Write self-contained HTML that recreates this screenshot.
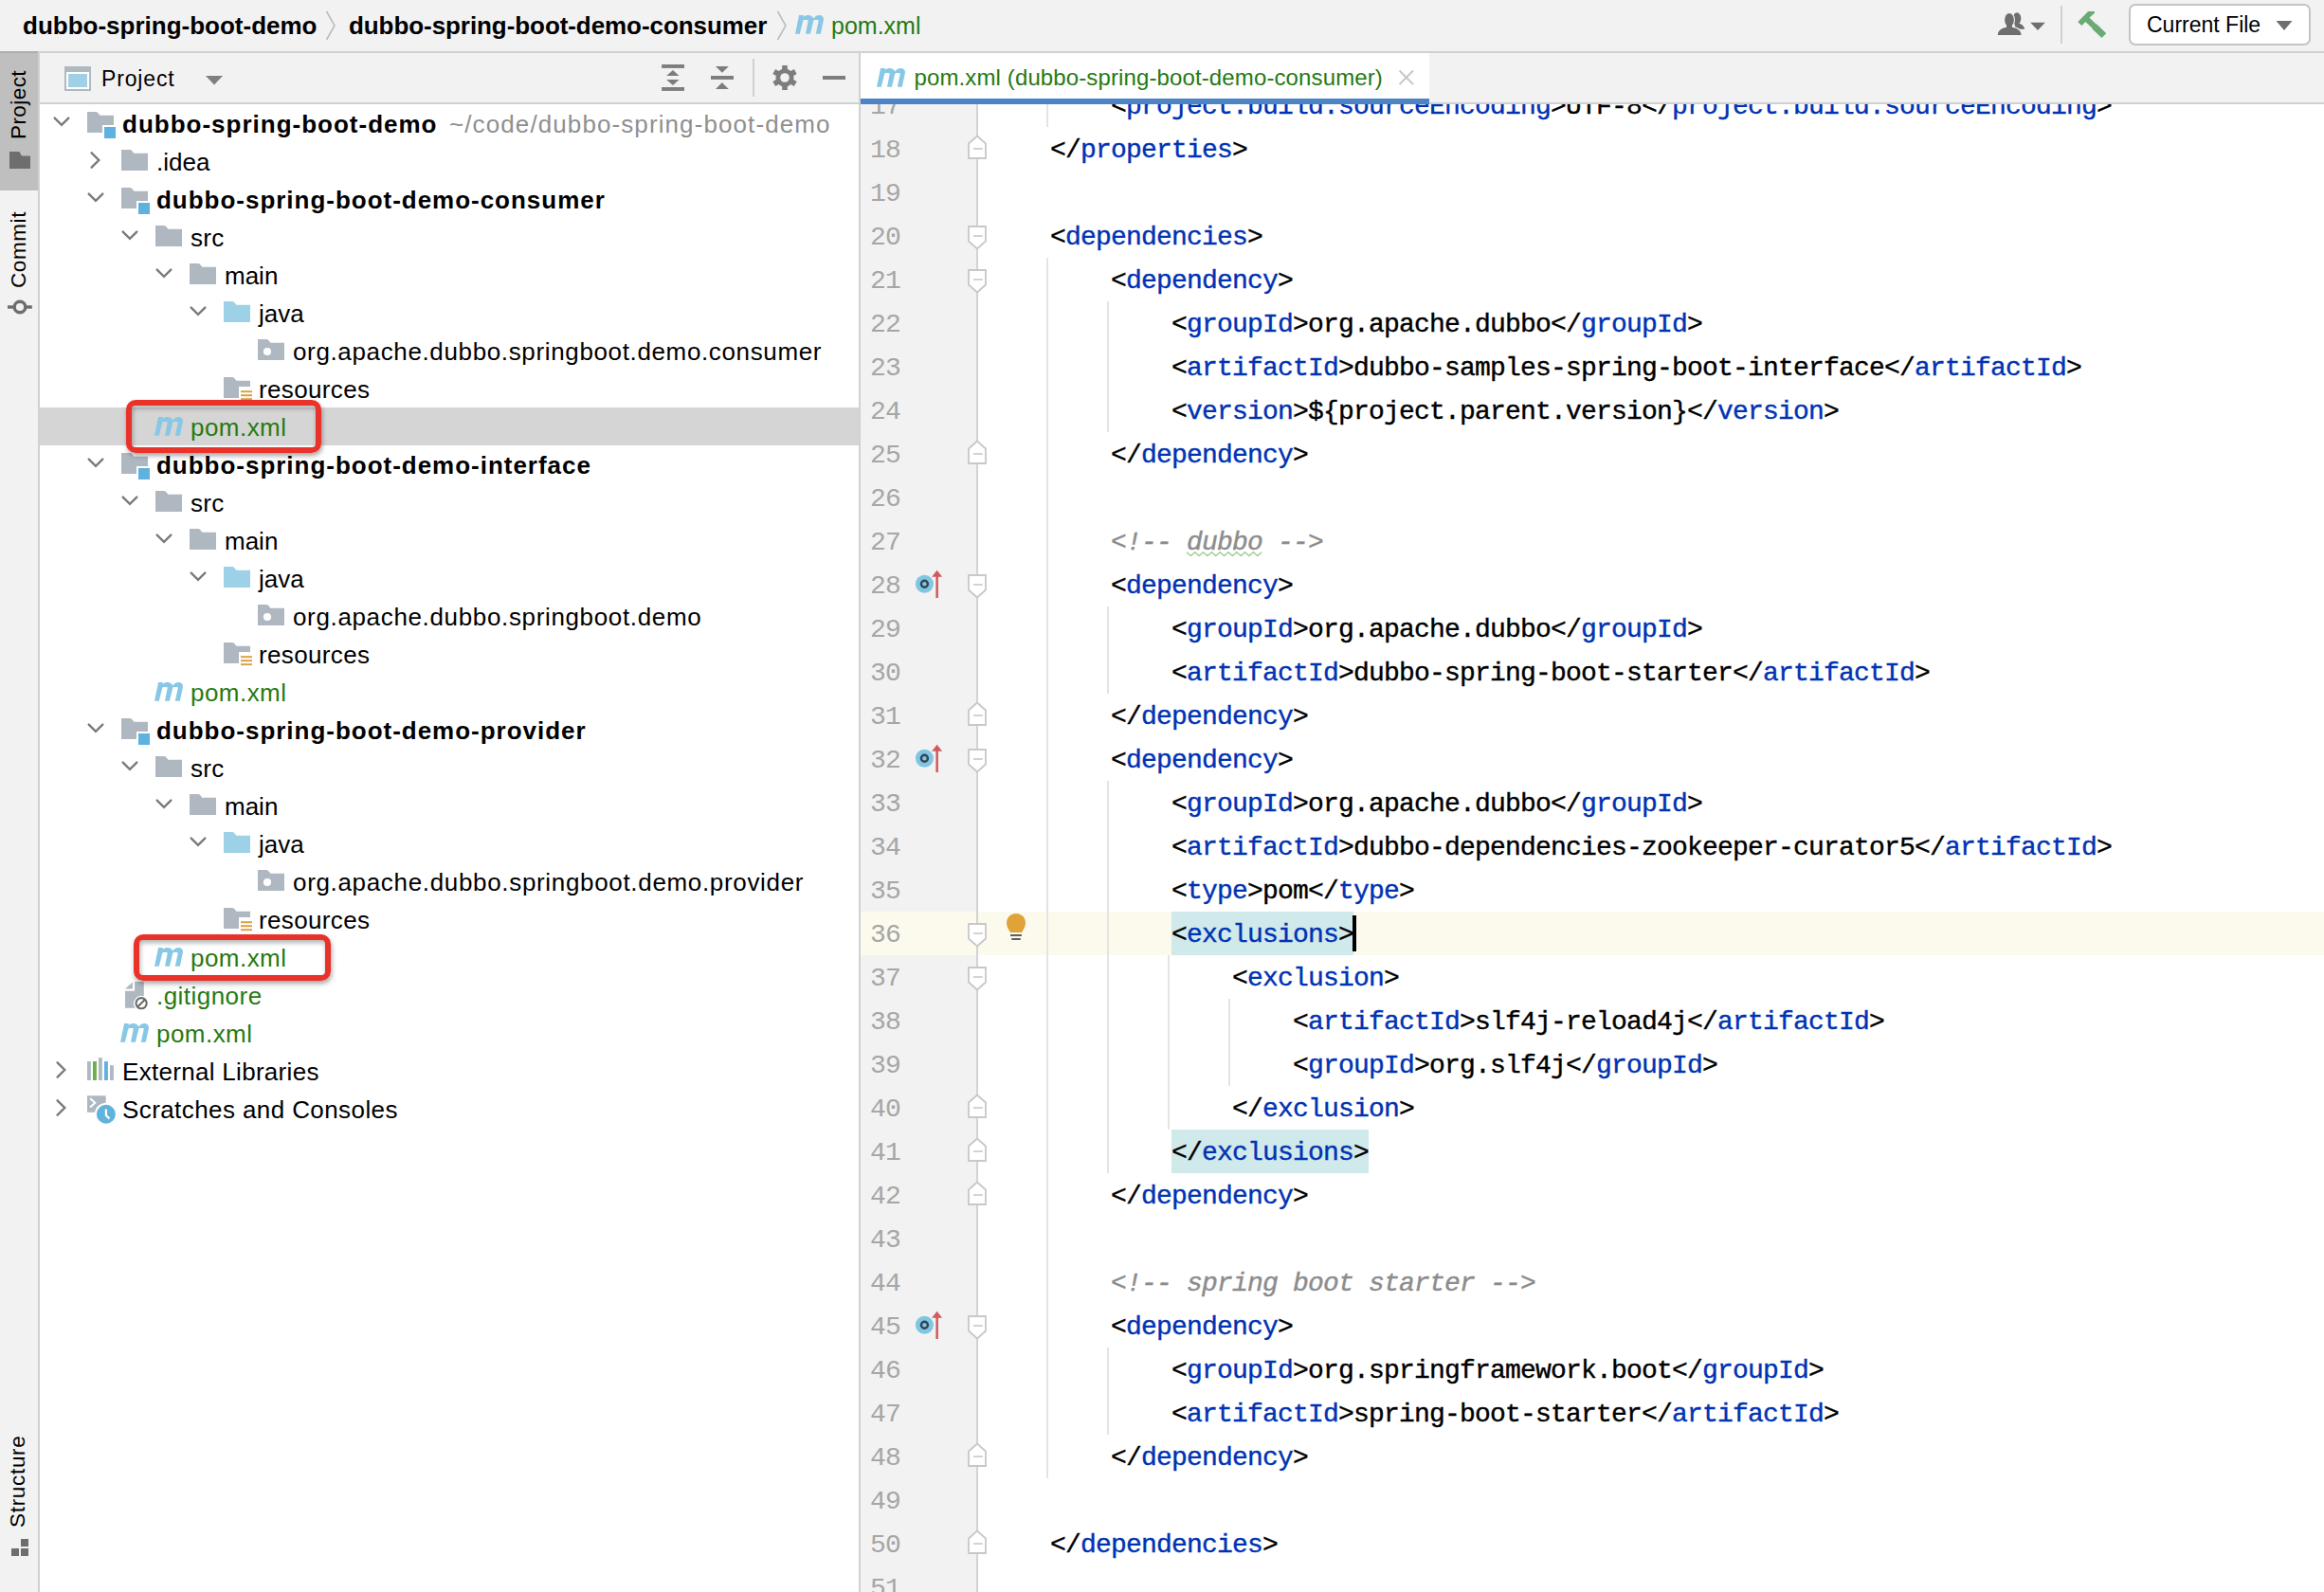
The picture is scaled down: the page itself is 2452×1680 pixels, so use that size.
<!DOCTYPE html><html><head><meta charset="utf-8"><style>
*{margin:0;padding:0;box-sizing:border-box}
html,body{width:2452px;height:1680px;overflow:hidden;background:#fff}
body{position:relative;font-family:"Liberation Sans",sans-serif;color:#000}
.a{position:absolute}
.t{position:absolute;white-space:pre;line-height:1}
svg{position:absolute;overflow:visible}
.code{position:absolute;font-family:"Liberation Mono",monospace;white-space:pre;line-height:46px;height:46px;-webkit-text-stroke:0.4px currentColor}
.tg{color:#0033b3}
.cm{color:#8c8c8c;font-style:italic}
</style></head><body><div class="a" style="left:0px;top:0px;width:2452px;height:54px;background:#f2f2f2;"></div>
<div class="a" style="left:0px;top:54px;width:2452px;height:2px;background:#d1d1d1;"></div>
<div class="t" style="left:24px;top:13.99px;font-size:26px;color:#000;font-weight:bold;letter-spacing:0px;">dubbo-spring-boot-demo</div>
<svg style="left:340px;top:10px" width="20" height="36" viewBox="0 0 20 36"><polyline points="4.5,2 13,17 4.5,32" fill="none" stroke="#b9bdc1" stroke-width="1.6"/></svg>
<div class="t" style="left:368px;top:13.99px;font-size:26px;color:#000;font-weight:bold;letter-spacing:-0.07px;">dubbo-spring-boot-demo-consumer</div>
<svg style="left:816px;top:10px" width="20" height="36" viewBox="0 0 20 36"><polyline points="4.5,2 13,17 4.5,32" fill="none" stroke="#b9bdc1" stroke-width="1.6"/></svg>
<svg style="left:839px;top:15.8px" width="31" height="21" viewBox="0 0 31 21"><path d="M0,19.8 L4.05,0 H8.85 L8.5,1.7 C10,0.5 12,0 13.8,0 C16.3,0 18.3,1.3 19.4,3.4 C20.9,1.1 23.2,0 25.3,0 C28.7,0 30.4,2.3 29.9,5.2 L26.8,19.8 H21.8 L24.6,6.6 C24.9,5.3 24.2,4.9 23.2,4.9 H20.4 C19.8,4.9 19.4,5.5 19.2,6.3 L15.9,19.8 H11.0 L13.6,6.6 C13.9,5.3 13.2,4.9 12.2,4.9 H9.4 C8.8,4.9 8.4,5.5 8.2,6.3 L4.8,19.8 Z" fill="#88c8e6"/></svg>
<div class="t" style="left:877px;top:14.84px;font-size:25px;color:#267a12;font-weight:normal;letter-spacing:0px;">pom.xml</div>
<svg style="left:2104px;top:10px" width="36" height="30" viewBox="0 0 36 30"><g fill="#6e6e6e"><ellipse cx="24" cy="9.5" rx="4.3" ry="6.2"/><path d="M21,13.8 C26,14.2 31.8,16 32,20.7 H23 Z"/></g><g fill="#6e6e6e" stroke="#f2f2f2" stroke-width="2.2"><ellipse cx="16" cy="11" rx="4.9" ry="7.1"/><path d="M3.8,27 C3.8,22 8,19.6 12.5,18.9 H19.5 C24,19.6 28.5,22 28.5,27 Z"/></g><g fill="#6e6e6e"><ellipse cx="16" cy="11" rx="4.9" ry="7.1"/><path d="M3.8,27 C3.8,22 8,19.6 12.5,18.9 H19.5 C24,19.6 28.5,22 28.5,27 Z"/><rect x="13" y="15" width="6" height="5"/></g></svg>
<svg style="left:2140px;top:20px" width="20" height="14" viewBox="0 0 20 14"><polygon points="2.2,3.8 17.8,3.8 10,11.9" fill="#6e6e6e"/></svg>
<div class="a" style="left:2174px;top:6px;width:2px;height:40px;background:#d1d1d1;"></div>
<svg style="left:2188px;top:8px" width="40" height="36" viewBox="0 0 40 36"><polygon points="4.2,15.2 15.1,4 21.9,4 21.9,5.8 16.5,10.7 23.4,17.3 24.6,17.8 34.3,27.3 29.5,32 19.6,22.7 19.3,21.4 12.3,14.9 8.4,19" fill="#6aab73"/></svg>
<div class="a" style="left:2246px;top:4px;width:192px;height:44px;background:#fff;border:2px solid #c4c4c4;border-radius:7px"></div>
<div class="t" style="left:2265px;top:14.53px;font-size:23px;color:#000;font-weight:normal;letter-spacing:0px;">Current File</div>
<svg style="left:2398px;top:18px" width="24" height="16" viewBox="0 0 24 16"><polygon points="3.5,4 20.5,4 12,14" fill="#6e6e6e"/></svg>
<div class="a" style="left:0px;top:56px;width:40px;height:1624px;background:#f2f2f2;"></div>
<div class="a" style="left:40px;top:56px;width:2px;height:1624px;background:#d1d1d1;"></div>
<div class="a" style="left:0px;top:54px;width:40px;height:147px;background:#bfbfbf;"></div>
<div class="a" style="left:0px;top:54px;width:40px;height:2px;background:#adadad;"></div>
<div class="t" style="left:9.23px;top:146.80px;font-size:22.5px;color:#000;letter-spacing:0.43px;transform:rotate(-90deg);transform-origin:0 0">Project</div>
<svg style="left:8px;top:158px" width="28" height="22" viewBox="0 0 28 22"><path d="M2 2 H12.3 L15 6.5 H24 V20 H2 Z" fill="#6e6e6e"/></svg>
<div class="t" style="left:9.23px;top:303.80px;font-size:22.5px;color:#000;letter-spacing:0.58px;transform:rotate(-90deg);transform-origin:0 0">Commit</div>
<svg style="left:6px;top:312px" width="32" height="24" viewBox="0 0 32 24"><circle cx="15" cy="12" r="5.8" fill="none" stroke="#6e6e6e" stroke-width="3.4"/><rect x="2" y="10.3" width="7" height="3.4" fill="#6e6e6e"/><rect x="21" y="10.3" width="6.8" height="3.4" fill="#6e6e6e"/></svg>
<div class="t" style="left:8.43px;top:1611.70px;font-size:22.5px;color:#000;letter-spacing:0.69px;transform:rotate(-90deg);transform-origin:0 0">Structure</div>
<svg style="left:10px;top:1620px" width="24" height="26" viewBox="0 0 24 26"><g fill="#6e6e6e"><rect x="12" y="4" width="8" height="8"/><rect x="2" y="14" width="8" height="8"/><rect x="12" y="14" width="8" height="8"/></g></svg>
<div class="a" style="left:42px;top:56px;width:864px;height:52px;background:#f2f2f2;"></div>
<div class="a" style="left:42px;top:108px;width:864px;height:2px;background:#d1d1d1;"></div>
<svg style="left:66px;top:68px" width="32" height="30" viewBox="0 0 32 30"><rect x="2" y="2" width="28" height="26" fill="#b0b8c0"/><rect x="4" y="8" width="24" height="18" fill="#fff"/><rect x="6" y="10" width="20" height="14" fill="#9fd0e6"/></svg>
<div class="t" style="left:107px;top:72.33px;font-size:23px;color:#000;font-weight:normal;letter-spacing:0.85px;">Project</div>
<svg style="left:214px;top:76px" width="24" height="16" viewBox="0 0 24 16"><polygon points="3,4 21,4 12,13.5" fill="#7f7f7f"/></svg>
<svg style="left:690px;top:62px" width="40" height="40" viewBox="0 0 40 40"><g fill="#7d7d7d"><rect x="8.1" y="6" width="23.9" height="3.9"/><polygon points="13.1,17.9 26.5,17.9 20,12"/><polygon points="13.1,22 26.5,22 20,27.9"/><rect x="8.1" y="30" width="23.9" height="3.9"/></g></svg>
<svg style="left:740px;top:62px" width="40" height="40" viewBox="0 0 40 40"><g fill="#7d7d7d"><polygon points="15,7.9 28.8,7.9 21.9,14.8"/><rect x="10" y="18" width="24" height="3.9"/><polygon points="15,32 28.8,32 21.9,25.1"/></g></svg>
<div class="a" style="left:794px;top:62px;width:2px;height:40px;background:#d1d1d1;"></div>
<svg style="left:808px;top:62px" width="40" height="40" viewBox="0 0 40 40"><g transform="translate(20,20)" fill="#7d7d7d"><rect x="-2.8" y="-13" width="5.6" height="6" transform="rotate(0)"/><rect x="-2.8" y="-13" width="5.6" height="6" transform="rotate(60)"/><rect x="-2.8" y="-13" width="5.6" height="6" transform="rotate(120)"/><rect x="-2.8" y="-13" width="5.6" height="6" transform="rotate(180)"/><rect x="-2.8" y="-13" width="5.6" height="6" transform="rotate(240)"/><rect x="-2.8" y="-13" width="5.6" height="6" transform="rotate(300)"/><circle r="9.6"/></g><circle cx="20" cy="20" r="4.8" fill="#f2f2f2"/></svg>
<div class="a" style="left:868px;top:80px;width:24px;height:4px;background:#7d7d7d;"></div>
<div class="a" style="left:42px;top:430px;width:864px;height:40px;background:#d5d5d5;"></div>
<svg style="left:56px;top:110px" width="30" height="40" viewBox="0 0 30 40"><polyline points="1.7,14.6 9,21.8 16.3,14.6" fill="none" stroke="#7a7a7a" stroke-width="2.4" stroke-linecap="round"/></svg>
<svg style="left:92px;top:118px" width="32" height="28" viewBox="0 0 32 28"><path d="M0 0 H8.7 Q10.5 0 11.6 1.4 L13.4 3.8 H28 V14 H16 V22 H0 Z" fill="#afb8c0"/><rect x="18" y="16" width="12" height="12" fill="#5fb2dd"/></svg>
<div class="t" style="left:129px;top:117.99px;font-size:26px;color:#000;font-weight:bold;letter-spacing:1.0px;">dubbo-spring-boot-demo</div>
<div class="t" style="left:474px;top:117.99px;font-size:26px;color:#8f8f8f;font-weight:normal;letter-spacing:1.1px;">~/code/dubbo-spring-boot-demo</div>
<svg style="left:92px;top:150px" width="30" height="40" viewBox="0 0 30 40"><polyline points="4.6,11.3 12.3,19 4.6,26.7" fill="none" stroke="#7a7a7a" stroke-width="2.4" stroke-linecap="round"/></svg>
<svg style="left:128px;top:158px" width="28" height="22" viewBox="0 0 28 22"><path d="M0 0 H8.7 Q10.5 0 11.6 1.4 L13.4 3.8 H28 V22 H0 Z" fill="#afb8c0"/></svg>
<div class="t" style="left:165px;top:157.99px;font-size:26px;color:#000;font-weight:normal;letter-spacing:0px;">.idea</div>
<svg style="left:92px;top:190px" width="30" height="40" viewBox="0 0 30 40"><polyline points="1.7,14.6 9,21.8 16.3,14.6" fill="none" stroke="#7a7a7a" stroke-width="2.4" stroke-linecap="round"/></svg>
<svg style="left:128px;top:198px" width="32" height="28" viewBox="0 0 32 28"><path d="M0 0 H8.7 Q10.5 0 11.6 1.4 L13.4 3.8 H28 V14 H16 V22 H0 Z" fill="#afb8c0"/><rect x="18" y="16" width="12" height="12" fill="#5fb2dd"/></svg>
<div class="t" style="left:165px;top:197.99px;font-size:26px;color:#000;font-weight:bold;letter-spacing:0.98px;">dubbo-spring-boot-demo-consumer</div>
<svg style="left:128px;top:230px" width="30" height="40" viewBox="0 0 30 40"><polyline points="1.7,14.6 9,21.8 16.3,14.6" fill="none" stroke="#7a7a7a" stroke-width="2.4" stroke-linecap="round"/></svg>
<svg style="left:164px;top:238px" width="28" height="22" viewBox="0 0 28 22"><path d="M0 0 H8.7 Q10.5 0 11.6 1.4 L13.4 3.8 H28 V22 H0 Z" fill="#afb8c0"/></svg>
<div class="t" style="left:201px;top:237.99px;font-size:26px;color:#000;font-weight:normal;letter-spacing:0.3px;">src</div>
<svg style="left:164px;top:270px" width="30" height="40" viewBox="0 0 30 40"><polyline points="1.7,14.6 9,21.8 16.3,14.6" fill="none" stroke="#7a7a7a" stroke-width="2.4" stroke-linecap="round"/></svg>
<svg style="left:200px;top:278px" width="28" height="22" viewBox="0 0 28 22"><path d="M0 0 H8.7 Q10.5 0 11.6 1.4 L13.4 3.8 H28 V22 H0 Z" fill="#afb8c0"/></svg>
<div class="t" style="left:237px;top:277.99px;font-size:26px;color:#000;font-weight:normal;letter-spacing:0px;">main</div>
<svg style="left:200px;top:310px" width="30" height="40" viewBox="0 0 30 40"><polyline points="1.7,14.6 9,21.8 16.3,14.6" fill="none" stroke="#7a7a7a" stroke-width="2.4" stroke-linecap="round"/></svg>
<svg style="left:236px;top:318px" width="28" height="22" viewBox="0 0 28 22"><path d="M0 0 H8.7 Q10.5 0 11.6 1.4 L13.4 3.8 H28 V22 H0 Z" fill="#9dd1e8"/></svg>
<div class="t" style="left:273px;top:317.99px;font-size:26px;color:#000;font-weight:normal;letter-spacing:0px;">java</div>
<svg style="left:272px;top:358px" width="28" height="22" viewBox="0 0 28 22"><path d="M0 0 H8.7 Q10.5 0 11.6 1.4 L13.4 3.8 H28 V22 H0 Z" fill="#afb8c0"/><circle cx="10" cy="13" r="4.1" fill="#fff"/></svg>
<div class="t" style="left:309px;top:357.99px;font-size:26px;color:#000;font-weight:normal;letter-spacing:0.64px;">org.apache.dubbo.springboot.demo.consumer</div>
<svg style="left:236px;top:398px" width="32" height="26" viewBox="0 0 32 26"><path d="M0 0 H8.7 Q10.5 0 11.6 1.4 L13.4 3.8 H28 V10 H16 V22 H0 Z" fill="#afb8c0"/><g fill="#d9a343"><rect x="18" y="14.2" width="12" height="2"/><rect x="18" y="18.2" width="12" height="2"/><rect x="18" y="22.2" width="12" height="2"/></g></svg>
<div class="t" style="left:273px;top:397.99px;font-size:26px;color:#000;font-weight:normal;letter-spacing:0.36px;">resources</div>
<svg style="left:163px;top:440px" width="31" height="21" viewBox="0 0 31 21"><path d="M0,19.8 L4.05,0 H8.85 L8.5,1.7 C10,0.5 12,0 13.8,0 C16.3,0 18.3,1.3 19.4,3.4 C20.9,1.1 23.2,0 25.3,0 C28.7,0 30.4,2.3 29.9,5.2 L26.8,19.8 H21.8 L24.6,6.6 C24.9,5.3 24.2,4.9 23.2,4.9 H20.4 C19.8,4.9 19.4,5.5 19.2,6.3 L15.9,19.8 H11.0 L13.6,6.6 C13.9,5.3 13.2,4.9 12.2,4.9 H9.4 C8.8,4.9 8.4,5.5 8.2,6.3 L4.8,19.8 Z" fill="#88c8e6"/></svg>
<div class="t" style="left:201px;top:437.99px;font-size:26px;color:#267a12;font-weight:normal;letter-spacing:0.46px;">pom.xml</div>
<svg style="left:92px;top:470px" width="30" height="40" viewBox="0 0 30 40"><polyline points="1.7,14.6 9,21.8 16.3,14.6" fill="none" stroke="#7a7a7a" stroke-width="2.4" stroke-linecap="round"/></svg>
<svg style="left:128px;top:478px" width="32" height="28" viewBox="0 0 32 28"><path d="M0 0 H8.7 Q10.5 0 11.6 1.4 L13.4 3.8 H28 V14 H16 V22 H0 Z" fill="#afb8c0"/><rect x="18" y="16" width="12" height="12" fill="#5fb2dd"/></svg>
<div class="t" style="left:165px;top:477.99px;font-size:26px;color:#000;font-weight:bold;letter-spacing:0.98px;">dubbo-spring-boot-demo-interface</div>
<svg style="left:128px;top:510px" width="30" height="40" viewBox="0 0 30 40"><polyline points="1.7,14.6 9,21.8 16.3,14.6" fill="none" stroke="#7a7a7a" stroke-width="2.4" stroke-linecap="round"/></svg>
<svg style="left:164px;top:518px" width="28" height="22" viewBox="0 0 28 22"><path d="M0 0 H8.7 Q10.5 0 11.6 1.4 L13.4 3.8 H28 V22 H0 Z" fill="#afb8c0"/></svg>
<div class="t" style="left:201px;top:517.99px;font-size:26px;color:#000;font-weight:normal;letter-spacing:0.3px;">src</div>
<svg style="left:164px;top:550px" width="30" height="40" viewBox="0 0 30 40"><polyline points="1.7,14.6 9,21.8 16.3,14.6" fill="none" stroke="#7a7a7a" stroke-width="2.4" stroke-linecap="round"/></svg>
<svg style="left:200px;top:558px" width="28" height="22" viewBox="0 0 28 22"><path d="M0 0 H8.7 Q10.5 0 11.6 1.4 L13.4 3.8 H28 V22 H0 Z" fill="#afb8c0"/></svg>
<div class="t" style="left:237px;top:557.99px;font-size:26px;color:#000;font-weight:normal;letter-spacing:0px;">main</div>
<svg style="left:200px;top:590px" width="30" height="40" viewBox="0 0 30 40"><polyline points="1.7,14.6 9,21.8 16.3,14.6" fill="none" stroke="#7a7a7a" stroke-width="2.4" stroke-linecap="round"/></svg>
<svg style="left:236px;top:598px" width="28" height="22" viewBox="0 0 28 22"><path d="M0 0 H8.7 Q10.5 0 11.6 1.4 L13.4 3.8 H28 V22 H0 Z" fill="#9dd1e8"/></svg>
<div class="t" style="left:273px;top:597.99px;font-size:26px;color:#000;font-weight:normal;letter-spacing:0px;">java</div>
<svg style="left:272px;top:638px" width="28" height="22" viewBox="0 0 28 22"><path d="M0 0 H8.7 Q10.5 0 11.6 1.4 L13.4 3.8 H28 V22 H0 Z" fill="#afb8c0"/><circle cx="10" cy="13" r="4.1" fill="#fff"/></svg>
<div class="t" style="left:309px;top:637.99px;font-size:26px;color:#000;font-weight:normal;letter-spacing:0.65px;">org.apache.dubbo.springboot.demo</div>
<svg style="left:236px;top:678px" width="32" height="26" viewBox="0 0 32 26"><path d="M0 0 H8.7 Q10.5 0 11.6 1.4 L13.4 3.8 H28 V10 H16 V22 H0 Z" fill="#afb8c0"/><g fill="#d9a343"><rect x="18" y="14.2" width="12" height="2"/><rect x="18" y="18.2" width="12" height="2"/><rect x="18" y="22.2" width="12" height="2"/></g></svg>
<div class="t" style="left:273px;top:677.99px;font-size:26px;color:#000;font-weight:normal;letter-spacing:0.36px;">resources</div>
<svg style="left:163px;top:720px" width="31" height="21" viewBox="0 0 31 21"><path d="M0,19.8 L4.05,0 H8.85 L8.5,1.7 C10,0.5 12,0 13.8,0 C16.3,0 18.3,1.3 19.4,3.4 C20.9,1.1 23.2,0 25.3,0 C28.7,0 30.4,2.3 29.9,5.2 L26.8,19.8 H21.8 L24.6,6.6 C24.9,5.3 24.2,4.9 23.2,4.9 H20.4 C19.8,4.9 19.4,5.5 19.2,6.3 L15.9,19.8 H11.0 L13.6,6.6 C13.9,5.3 13.2,4.9 12.2,4.9 H9.4 C8.8,4.9 8.4,5.5 8.2,6.3 L4.8,19.8 Z" fill="#88c8e6"/></svg>
<div class="t" style="left:201px;top:717.99px;font-size:26px;color:#267a12;font-weight:normal;letter-spacing:0.46px;">pom.xml</div>
<svg style="left:92px;top:750px" width="30" height="40" viewBox="0 0 30 40"><polyline points="1.7,14.6 9,21.8 16.3,14.6" fill="none" stroke="#7a7a7a" stroke-width="2.4" stroke-linecap="round"/></svg>
<svg style="left:128px;top:758px" width="32" height="28" viewBox="0 0 32 28"><path d="M0 0 H8.7 Q10.5 0 11.6 1.4 L13.4 3.8 H28 V14 H16 V22 H0 Z" fill="#afb8c0"/><rect x="18" y="16" width="12" height="12" fill="#5fb2dd"/></svg>
<div class="t" style="left:165px;top:757.99px;font-size:26px;color:#000;font-weight:bold;letter-spacing:0.98px;">dubbo-spring-boot-demo-provider</div>
<svg style="left:128px;top:790px" width="30" height="40" viewBox="0 0 30 40"><polyline points="1.7,14.6 9,21.8 16.3,14.6" fill="none" stroke="#7a7a7a" stroke-width="2.4" stroke-linecap="round"/></svg>
<svg style="left:164px;top:798px" width="28" height="22" viewBox="0 0 28 22"><path d="M0 0 H8.7 Q10.5 0 11.6 1.4 L13.4 3.8 H28 V22 H0 Z" fill="#afb8c0"/></svg>
<div class="t" style="left:201px;top:797.99px;font-size:26px;color:#000;font-weight:normal;letter-spacing:0.3px;">src</div>
<svg style="left:164px;top:830px" width="30" height="40" viewBox="0 0 30 40"><polyline points="1.7,14.6 9,21.8 16.3,14.6" fill="none" stroke="#7a7a7a" stroke-width="2.4" stroke-linecap="round"/></svg>
<svg style="left:200px;top:838px" width="28" height="22" viewBox="0 0 28 22"><path d="M0 0 H8.7 Q10.5 0 11.6 1.4 L13.4 3.8 H28 V22 H0 Z" fill="#afb8c0"/></svg>
<div class="t" style="left:237px;top:837.99px;font-size:26px;color:#000;font-weight:normal;letter-spacing:0px;">main</div>
<svg style="left:200px;top:870px" width="30" height="40" viewBox="0 0 30 40"><polyline points="1.7,14.6 9,21.8 16.3,14.6" fill="none" stroke="#7a7a7a" stroke-width="2.4" stroke-linecap="round"/></svg>
<svg style="left:236px;top:878px" width="28" height="22" viewBox="0 0 28 22"><path d="M0 0 H8.7 Q10.5 0 11.6 1.4 L13.4 3.8 H28 V22 H0 Z" fill="#9dd1e8"/></svg>
<div class="t" style="left:273px;top:877.99px;font-size:26px;color:#000;font-weight:normal;letter-spacing:0px;">java</div>
<svg style="left:272px;top:918px" width="28" height="22" viewBox="0 0 28 22"><path d="M0 0 H8.7 Q10.5 0 11.6 1.4 L13.4 3.8 H28 V22 H0 Z" fill="#afb8c0"/><circle cx="10" cy="13" r="4.1" fill="#fff"/></svg>
<div class="t" style="left:309px;top:917.99px;font-size:26px;color:#000;font-weight:normal;letter-spacing:0.67px;">org.apache.dubbo.springboot.demo.provider</div>
<svg style="left:236px;top:958px" width="32" height="26" viewBox="0 0 32 26"><path d="M0 0 H8.7 Q10.5 0 11.6 1.4 L13.4 3.8 H28 V10 H16 V22 H0 Z" fill="#afb8c0"/><g fill="#d9a343"><rect x="18" y="14.2" width="12" height="2"/><rect x="18" y="18.2" width="12" height="2"/><rect x="18" y="22.2" width="12" height="2"/></g></svg>
<div class="t" style="left:273px;top:957.99px;font-size:26px;color:#000;font-weight:normal;letter-spacing:0.36px;">resources</div>
<svg style="left:163px;top:1000px" width="31" height="21" viewBox="0 0 31 21"><path d="M0,19.8 L4.05,0 H8.85 L8.5,1.7 C10,0.5 12,0 13.8,0 C16.3,0 18.3,1.3 19.4,3.4 C20.9,1.1 23.2,0 25.3,0 C28.7,0 30.4,2.3 29.9,5.2 L26.8,19.8 H21.8 L24.6,6.6 C24.9,5.3 24.2,4.9 23.2,4.9 H20.4 C19.8,4.9 19.4,5.5 19.2,6.3 L15.9,19.8 H11.0 L13.6,6.6 C13.9,5.3 13.2,4.9 12.2,4.9 H9.4 C8.8,4.9 8.4,5.5 8.2,6.3 L4.8,19.8 Z" fill="#88c8e6"/></svg>
<div class="t" style="left:201px;top:997.99px;font-size:26px;color:#267a12;font-weight:normal;letter-spacing:0.46px;">pom.xml</div>
<svg style="left:131.9px;top:1036px" width="28" height="32" viewBox="0 0 28 32"><path d="M10.1 0 H19.8 V15.2 A8.2 8.2 0 0 0 10.6 27.7 H0 V9.7 H10.1 Z" fill="#afb8c0"/><path d="M0 7.5 L7.9 0.5 V7.5 Z" fill="#afb8c0"/><circle cx="17.1" cy="22.7" r="5.6" fill="none" stroke="#6b6b6b" stroke-width="2.1"/><line x1="13.2" y1="26.6" x2="21" y2="18.8" stroke="#6b6b6b" stroke-width="2.1"/></svg>
<div class="t" style="left:165px;top:1037.99px;font-size:26px;color:#267a12;font-weight:normal;letter-spacing:0.46px;">.gitignore</div>
<svg style="left:127px;top:1080px" width="31" height="21" viewBox="0 0 31 21"><path d="M0,19.8 L4.05,0 H8.85 L8.5,1.7 C10,0.5 12,0 13.8,0 C16.3,0 18.3,1.3 19.4,3.4 C20.9,1.1 23.2,0 25.3,0 C28.7,0 30.4,2.3 29.9,5.2 L26.8,19.8 H21.8 L24.6,6.6 C24.9,5.3 24.2,4.9 23.2,4.9 H20.4 C19.8,4.9 19.4,5.5 19.2,6.3 L15.9,19.8 H11.0 L13.6,6.6 C13.9,5.3 13.2,4.9 12.2,4.9 H9.4 C8.8,4.9 8.4,5.5 8.2,6.3 L4.8,19.8 Z" fill="#88c8e6"/></svg>
<div class="t" style="left:165px;top:1077.99px;font-size:26px;color:#267a12;font-weight:normal;letter-spacing:0.46px;">pom.xml</div>
<svg style="left:56px;top:1110px" width="30" height="40" viewBox="0 0 30 40"><polyline points="4.6,11.3 12.3,19 4.6,26.7" fill="none" stroke="#7a7a7a" stroke-width="2.4" stroke-linecap="round"/></svg>
<svg style="left:92px;top:1110px" width="30" height="32" viewBox="0 0 30 32"><rect x="0" y="10" width="3.8" height="20" fill="#afb8c0"/><rect x="6" y="10" width="3.9" height="20" fill="#6db04a"/><rect x="12" y="6.2" width="3.8" height="23.8" fill="#afb8c0"/><rect x="18" y="10" width="3.9" height="20" fill="#62b3dc"/><rect x="24" y="14.2" width="3.9" height="15.8" fill="#afb8c0"/></svg>
<div class="t" style="left:129px;top:1117.99px;font-size:26px;color:#000;font-weight:normal;letter-spacing:0.3px;">External Libraries</div>
<svg style="left:56px;top:1150px" width="30" height="40" viewBox="0 0 30 40"><polyline points="4.6,11.3 12.3,19 4.6,26.7" fill="none" stroke="#7a7a7a" stroke-width="2.4" stroke-linecap="round"/></svg>
<svg style="left:92px;top:1154px" width="34" height="36" viewBox="0 0 34 36"><path d="M0 2.2 H19.7 V16.2 A11.5 11.5 0 0 0 8.2 19.8 H0 Z" fill="#afb8c0"/><polyline points="3,5 8.3,9.8 3,14.6" fill="none" stroke="#fff" stroke-width="2"/><circle cx="19.9" cy="21.7" r="12" fill="#fff"/><circle cx="19.9" cy="21.7" r="10" fill="#62b3dc"/><polyline points="19.9,16.5 19.9,23 23.5,26.5" fill="none" stroke="#fff" stroke-width="2.2"/></svg>
<div class="t" style="left:129px;top:1157.99px;font-size:26px;color:#000;font-weight:normal;letter-spacing:0.41px;">Scratches and Consoles</div>
<div class="a" style="left:133px;top:422px;width:206px;height:56px;border:6px solid #e8322a;border-radius:10px;box-shadow:1px 3px 5px rgba(0,0,0,.35), inset 1px 3px 5px rgba(0,0,0,.3)"></div>
<div class="a" style="left:141px;top:986px;width:208px;height:49px;border:6px solid #e8322a;border-radius:10px;box-shadow:1px 3px 5px rgba(0,0,0,.35), inset 1px 3px 5px rgba(0,0,0,.3)"></div>
<div class="a" style="left:906px;top:56px;width:2px;height:1624px;background:#d1d1d1;"></div>
<div class="a" style="left:908px;top:56px;width:1544px;height:52px;background:#f2f2f2;"></div>
<div class="a" style="left:908px;top:108px;width:1544px;height:2px;background:#d1d1d1;"></div>
<div class="a" style="left:908px;top:56px;width:600px;height:54px;background:#fff;"></div>
<div class="a" style="left:908px;top:104px;width:600px;height:6px;background:#4d84c6;"></div>
<svg style="left:924.5px;top:71.5px" width="31" height="21" viewBox="0 0 31 21"><path d="M0,19.8 L4.05,0 H8.85 L8.5,1.7 C10,0.5 12,0 13.8,0 C16.3,0 18.3,1.3 19.4,3.4 C20.9,1.1 23.2,0 25.3,0 C28.7,0 30.4,2.3 29.9,5.2 L26.8,19.8 H21.8 L24.6,6.6 C24.9,5.3 24.2,4.9 23.2,4.9 H20.4 C19.8,4.9 19.4,5.5 19.2,6.3 L15.9,19.8 H11.0 L13.6,6.6 C13.9,5.3 13.2,4.9 12.2,4.9 H9.4 C8.8,4.9 8.4,5.5 8.2,6.3 L4.8,19.8 Z" fill="#88c8e6"/></svg>
<div class="t" style="left:964.5px;top:69.68px;font-size:24px;color:#267a12;font-weight:normal;letter-spacing:0.12px;">pom.xml (dubbo-spring-boot-demo-consumer)</div>
<svg style="left:1474px;top:72px" width="20" height="20" viewBox="0 0 20 20"><g stroke="#c4c7ca" stroke-width="2"><line x1="2.5" y1="2.5" x2="17" y2="17"/><line x1="17" y1="2.5" x2="2.5" y2="17"/></g></svg>
<div class="a" style="left:908px;top:110px;width:1544px;height:1570px;overflow:hidden">
<div class="a" style="left:0px;top:0px;width:123px;height:1570px;background:#f2f2f2;"></div>
<div class="a" style="left:0px;top:852px;width:1544px;height:46px;background:#fcfaed;"></div>
<div class="a" style="left:122px;top:0px;width:2px;height:1570px;background:#d3d3d3;"></div>
<div class="a" style="left:328px;top:852px;width:192px;height:46px;background:#d0e9ea;"></div>
<div class="a" style="left:328px;top:1082px;width:208px;height:46px;background:#d0e9ea;"></div>
<div class="a" style="left:196px;top:-344px;width:2px;height:368px;background:#e4e4e4;"></div>
<div class="a" style="left:196px;top:162px;width:2px;height:1288px;background:#e4e4e4;"></div>
<div class="a" style="left:260px;top:208px;width:2px;height:138px;background:#e4e4e4;"></div>
<div class="a" style="left:260px;top:530px;width:2px;height:92px;background:#e4e4e4;"></div>
<div class="a" style="left:260px;top:714px;width:2px;height:414px;background:#e4e4e4;"></div>
<div class="a" style="left:324px;top:898px;width:2px;height:184px;background:#e4e4e4;"></div>
<div class="a" style="left:388px;top:944px;width:2px;height:92px;background:#e4e4e4;"></div>
<div class="a" style="left:260px;top:1312px;width:2px;height:92px;background:#e4e4e4;"></div>
<div class="code" style="left:8px;top:-20.5px;width:34px;text-align:right;font-size:28px;letter-spacing:-0.8027px;color:#a6a6a6;-webkit-text-stroke:0">17</div>
<div class="code" style="left:136px;top:-20px;font-size:28px;letter-spacing:-0.8027px">        &lt;<span class="tg">project.build.sourceEncoding</span>&gt;UTF-8&lt;/<span class="tg">project.build.sourceEncoding</span>&gt;</div>
<div class="code" style="left:8px;top:25.5px;width:34px;text-align:right;font-size:28px;letter-spacing:-0.8027px;color:#a6a6a6;-webkit-text-stroke:0">18</div>
<div class="code" style="left:136px;top:26px;font-size:28px;letter-spacing:-0.8027px">    &lt;/<span class="tg">properties</span>&gt;</div>
<div class="code" style="left:8px;top:71.5px;width:34px;text-align:right;font-size:28px;letter-spacing:-0.8027px;color:#a6a6a6;-webkit-text-stroke:0">19</div>
<div class="code" style="left:8px;top:117.5px;width:34px;text-align:right;font-size:28px;letter-spacing:-0.8027px;color:#a6a6a6;-webkit-text-stroke:0">20</div>
<div class="code" style="left:136px;top:118px;font-size:28px;letter-spacing:-0.8027px">    &lt;<span class="tg">dependencies</span>&gt;</div>
<div class="code" style="left:8px;top:163.5px;width:34px;text-align:right;font-size:28px;letter-spacing:-0.8027px;color:#a6a6a6;-webkit-text-stroke:0">21</div>
<div class="code" style="left:136px;top:164px;font-size:28px;letter-spacing:-0.8027px">        &lt;<span class="tg">dependency</span>&gt;</div>
<div class="code" style="left:8px;top:209.5px;width:34px;text-align:right;font-size:28px;letter-spacing:-0.8027px;color:#a6a6a6;-webkit-text-stroke:0">22</div>
<div class="code" style="left:136px;top:210px;font-size:28px;letter-spacing:-0.8027px">            &lt;<span class="tg">groupId</span>&gt;org.apache.dubbo&lt;/<span class="tg">groupId</span>&gt;</div>
<div class="code" style="left:8px;top:255.5px;width:34px;text-align:right;font-size:28px;letter-spacing:-0.8027px;color:#a6a6a6;-webkit-text-stroke:0">23</div>
<div class="code" style="left:136px;top:256px;font-size:28px;letter-spacing:-0.8027px">            &lt;<span class="tg">artifactId</span>&gt;dubbo-samples-spring-boot-interface&lt;/<span class="tg">artifactId</span>&gt;</div>
<div class="code" style="left:8px;top:301.5px;width:34px;text-align:right;font-size:28px;letter-spacing:-0.8027px;color:#a6a6a6;-webkit-text-stroke:0">24</div>
<div class="code" style="left:136px;top:302px;font-size:28px;letter-spacing:-0.8027px">            &lt;<span class="tg">version</span>&gt;${project.parent.version}&lt;/<span class="tg">version</span>&gt;</div>
<div class="code" style="left:8px;top:347.5px;width:34px;text-align:right;font-size:28px;letter-spacing:-0.8027px;color:#a6a6a6;-webkit-text-stroke:0">25</div>
<div class="code" style="left:136px;top:348px;font-size:28px;letter-spacing:-0.8027px">        &lt;/<span class="tg">dependency</span>&gt;</div>
<div class="code" style="left:8px;top:393.5px;width:34px;text-align:right;font-size:28px;letter-spacing:-0.8027px;color:#a6a6a6;-webkit-text-stroke:0">26</div>
<div class="code" style="left:8px;top:439.5px;width:34px;text-align:right;font-size:28px;letter-spacing:-0.8027px;color:#a6a6a6;-webkit-text-stroke:0">27</div>
<div class="code" style="left:136px;top:440px;font-size:28px;letter-spacing:-0.8027px">        <span class="cm">&lt;!-- dubbo --&gt;</span></div>
<div class="code" style="left:8px;top:485.5px;width:34px;text-align:right;font-size:28px;letter-spacing:-0.8027px;color:#a6a6a6;-webkit-text-stroke:0">28</div>
<div class="code" style="left:136px;top:486px;font-size:28px;letter-spacing:-0.8027px">        &lt;<span class="tg">dependency</span>&gt;</div>
<div class="code" style="left:8px;top:531.5px;width:34px;text-align:right;font-size:28px;letter-spacing:-0.8027px;color:#a6a6a6;-webkit-text-stroke:0">29</div>
<div class="code" style="left:136px;top:532px;font-size:28px;letter-spacing:-0.8027px">            &lt;<span class="tg">groupId</span>&gt;org.apache.dubbo&lt;/<span class="tg">groupId</span>&gt;</div>
<div class="code" style="left:8px;top:577.5px;width:34px;text-align:right;font-size:28px;letter-spacing:-0.8027px;color:#a6a6a6;-webkit-text-stroke:0">30</div>
<div class="code" style="left:136px;top:578px;font-size:28px;letter-spacing:-0.8027px">            &lt;<span class="tg">artifactId</span>&gt;dubbo-spring-boot-starter&lt;/<span class="tg">artifactId</span>&gt;</div>
<div class="code" style="left:8px;top:623.5px;width:34px;text-align:right;font-size:28px;letter-spacing:-0.8027px;color:#a6a6a6;-webkit-text-stroke:0">31</div>
<div class="code" style="left:136px;top:624px;font-size:28px;letter-spacing:-0.8027px">        &lt;/<span class="tg">dependency</span>&gt;</div>
<div class="code" style="left:8px;top:669.5px;width:34px;text-align:right;font-size:28px;letter-spacing:-0.8027px;color:#a6a6a6;-webkit-text-stroke:0">32</div>
<div class="code" style="left:136px;top:670px;font-size:28px;letter-spacing:-0.8027px">        &lt;<span class="tg">dependency</span>&gt;</div>
<div class="code" style="left:8px;top:715.5px;width:34px;text-align:right;font-size:28px;letter-spacing:-0.8027px;color:#a6a6a6;-webkit-text-stroke:0">33</div>
<div class="code" style="left:136px;top:716px;font-size:28px;letter-spacing:-0.8027px">            &lt;<span class="tg">groupId</span>&gt;org.apache.dubbo&lt;/<span class="tg">groupId</span>&gt;</div>
<div class="code" style="left:8px;top:761.5px;width:34px;text-align:right;font-size:28px;letter-spacing:-0.8027px;color:#a6a6a6;-webkit-text-stroke:0">34</div>
<div class="code" style="left:136px;top:762px;font-size:28px;letter-spacing:-0.8027px">            &lt;<span class="tg">artifactId</span>&gt;dubbo-dependencies-zookeeper-curator5&lt;/<span class="tg">artifactId</span>&gt;</div>
<div class="code" style="left:8px;top:807.5px;width:34px;text-align:right;font-size:28px;letter-spacing:-0.8027px;color:#a6a6a6;-webkit-text-stroke:0">35</div>
<div class="code" style="left:136px;top:808px;font-size:28px;letter-spacing:-0.8027px">            &lt;<span class="tg">type</span>&gt;pom&lt;/<span class="tg">type</span>&gt;</div>
<div class="code" style="left:8px;top:853.5px;width:34px;text-align:right;font-size:28px;letter-spacing:-0.8027px;color:#a6a6a6;-webkit-text-stroke:0">36</div>
<div class="code" style="left:136px;top:854px;font-size:28px;letter-spacing:-0.8027px">            &lt;<span class="tg">exclusions</span>&gt;</div>
<div class="code" style="left:8px;top:899.5px;width:34px;text-align:right;font-size:28px;letter-spacing:-0.8027px;color:#a6a6a6;-webkit-text-stroke:0">37</div>
<div class="code" style="left:136px;top:900px;font-size:28px;letter-spacing:-0.8027px">                &lt;<span class="tg">exclusion</span>&gt;</div>
<div class="code" style="left:8px;top:945.5px;width:34px;text-align:right;font-size:28px;letter-spacing:-0.8027px;color:#a6a6a6;-webkit-text-stroke:0">38</div>
<div class="code" style="left:136px;top:946px;font-size:28px;letter-spacing:-0.8027px">                    &lt;<span class="tg">artifactId</span>&gt;slf4j-reload4j&lt;/<span class="tg">artifactId</span>&gt;</div>
<div class="code" style="left:8px;top:991.5px;width:34px;text-align:right;font-size:28px;letter-spacing:-0.8027px;color:#a6a6a6;-webkit-text-stroke:0">39</div>
<div class="code" style="left:136px;top:992px;font-size:28px;letter-spacing:-0.8027px">                    &lt;<span class="tg">groupId</span>&gt;org.slf4j&lt;/<span class="tg">groupId</span>&gt;</div>
<div class="code" style="left:8px;top:1037.5px;width:34px;text-align:right;font-size:28px;letter-spacing:-0.8027px;color:#a6a6a6;-webkit-text-stroke:0">40</div>
<div class="code" style="left:136px;top:1038px;font-size:28px;letter-spacing:-0.8027px">                &lt;/<span class="tg">exclusion</span>&gt;</div>
<div class="code" style="left:8px;top:1083.5px;width:34px;text-align:right;font-size:28px;letter-spacing:-0.8027px;color:#a6a6a6;-webkit-text-stroke:0">41</div>
<div class="code" style="left:136px;top:1084px;font-size:28px;letter-spacing:-0.8027px">            &lt;/<span class="tg">exclusions</span>&gt;</div>
<div class="code" style="left:8px;top:1129.5px;width:34px;text-align:right;font-size:28px;letter-spacing:-0.8027px;color:#a6a6a6;-webkit-text-stroke:0">42</div>
<div class="code" style="left:136px;top:1130px;font-size:28px;letter-spacing:-0.8027px">        &lt;/<span class="tg">dependency</span>&gt;</div>
<div class="code" style="left:8px;top:1175.5px;width:34px;text-align:right;font-size:28px;letter-spacing:-0.8027px;color:#a6a6a6;-webkit-text-stroke:0">43</div>
<div class="code" style="left:8px;top:1221.5px;width:34px;text-align:right;font-size:28px;letter-spacing:-0.8027px;color:#a6a6a6;-webkit-text-stroke:0">44</div>
<div class="code" style="left:136px;top:1222px;font-size:28px;letter-spacing:-0.8027px">        <span class="cm">&lt;!-- spring boot starter --&gt;</span></div>
<div class="code" style="left:8px;top:1267.5px;width:34px;text-align:right;font-size:28px;letter-spacing:-0.8027px;color:#a6a6a6;-webkit-text-stroke:0">45</div>
<div class="code" style="left:136px;top:1268px;font-size:28px;letter-spacing:-0.8027px">        &lt;<span class="tg">dependency</span>&gt;</div>
<div class="code" style="left:8px;top:1313.5px;width:34px;text-align:right;font-size:28px;letter-spacing:-0.8027px;color:#a6a6a6;-webkit-text-stroke:0">46</div>
<div class="code" style="left:136px;top:1314px;font-size:28px;letter-spacing:-0.8027px">            &lt;<span class="tg">groupId</span>&gt;org.springframework.boot&lt;/<span class="tg">groupId</span>&gt;</div>
<div class="code" style="left:8px;top:1359.5px;width:34px;text-align:right;font-size:28px;letter-spacing:-0.8027px;color:#a6a6a6;-webkit-text-stroke:0">47</div>
<div class="code" style="left:136px;top:1360px;font-size:28px;letter-spacing:-0.8027px">            &lt;<span class="tg">artifactId</span>&gt;spring-boot-starter&lt;/<span class="tg">artifactId</span>&gt;</div>
<div class="code" style="left:8px;top:1405.5px;width:34px;text-align:right;font-size:28px;letter-spacing:-0.8027px;color:#a6a6a6;-webkit-text-stroke:0">48</div>
<div class="code" style="left:136px;top:1406px;font-size:28px;letter-spacing:-0.8027px">        &lt;/<span class="tg">dependency</span>&gt;</div>
<div class="code" style="left:8px;top:1451.5px;width:34px;text-align:right;font-size:28px;letter-spacing:-0.8027px;color:#a6a6a6;-webkit-text-stroke:0">49</div>
<div class="code" style="left:8px;top:1497.5px;width:34px;text-align:right;font-size:28px;letter-spacing:-0.8027px;color:#a6a6a6;-webkit-text-stroke:0">50</div>
<div class="code" style="left:136px;top:1498px;font-size:28px;letter-spacing:-0.8027px">    &lt;/<span class="tg">dependencies</span>&gt;</div>
<div class="code" style="left:8px;top:1543.5px;width:34px;text-align:right;font-size:28px;letter-spacing:-0.8027px;color:#a6a6a6;-webkit-text-stroke:0">51</div>
<svg style="left:344px;top:472px" width="82" height="6" viewBox="0 0 82 6"><polyline points="0.0,0.8 4.4,4.6 8.8,0.8 13.2,4.6 17.6,0.8 22.0,4.6 26.4,0.8 30.8,4.6 35.2,0.8 39.6,4.6 44.0,0.8 48.4,4.6 52.8,0.8 57.2,4.6 61.6,0.8 66.0,4.6 70.4,0.8 74.8,4.6 79.2,0.8" fill="none" stroke="#a2d098" stroke-width="1.5"/></svg>
<div class="a" style="left:519px;top:856px;width:4px;height:38px;background:#000;"></div>
<svg style="left:112px;top:128px" width="24" height="26" viewBox="0 0 24 26"><path d="M2 1 H20 V16.5 L11 24.5 L2 16.5 Z" fill="#fff" stroke="#c8c8c8" stroke-width="1.8"/><line x1="7" y1="11" x2="16.8" y2="11" stroke="#c8c8c8" stroke-width="1.6"/></svg>
<svg style="left:112px;top:174px" width="24" height="26" viewBox="0 0 24 26"><path d="M2 1 H20 V16.5 L11 24.5 L2 16.5 Z" fill="#fff" stroke="#c8c8c8" stroke-width="1.8"/><line x1="7" y1="11" x2="16.8" y2="11" stroke="#c8c8c8" stroke-width="1.6"/></svg>
<svg style="left:112px;top:496px" width="24" height="26" viewBox="0 0 24 26"><path d="M2 1 H20 V16.5 L11 24.5 L2 16.5 Z" fill="#fff" stroke="#c8c8c8" stroke-width="1.8"/><line x1="7" y1="11" x2="16.8" y2="11" stroke="#c8c8c8" stroke-width="1.6"/></svg>
<svg style="left:112px;top:680px" width="24" height="26" viewBox="0 0 24 26"><path d="M2 1 H20 V16.5 L11 24.5 L2 16.5 Z" fill="#fff" stroke="#c8c8c8" stroke-width="1.8"/><line x1="7" y1="11" x2="16.8" y2="11" stroke="#c8c8c8" stroke-width="1.6"/></svg>
<svg style="left:112px;top:864px" width="24" height="26" viewBox="0 0 24 26"><path d="M2 1 H20 V16.5 L11 24.5 L2 16.5 Z" fill="#fff" stroke="#c8c8c8" stroke-width="1.8"/><line x1="7" y1="11" x2="16.8" y2="11" stroke="#c8c8c8" stroke-width="1.6"/></svg>
<svg style="left:112px;top:910px" width="24" height="26" viewBox="0 0 24 26"><path d="M2 1 H20 V16.5 L11 24.5 L2 16.5 Z" fill="#fff" stroke="#c8c8c8" stroke-width="1.8"/><line x1="7" y1="11" x2="16.8" y2="11" stroke="#c8c8c8" stroke-width="1.6"/></svg>
<svg style="left:112px;top:1278px" width="24" height="26" viewBox="0 0 24 26"><path d="M2 1 H20 V16.5 L11 24.5 L2 16.5 Z" fill="#fff" stroke="#c8c8c8" stroke-width="1.8"/><line x1="7" y1="11" x2="16.8" y2="11" stroke="#c8c8c8" stroke-width="1.6"/></svg>
<svg style="left:112px;top:32px" width="24" height="26" viewBox="0 0 24 26"><path d="M2 25 H20 V9.5 L11 1.5 L2 9.5 Z" fill="#fff" stroke="#c8c8c8" stroke-width="1.8"/><line x1="7" y1="15" x2="16.8" y2="15" stroke="#c8c8c8" stroke-width="1.6"/></svg>
<svg style="left:112px;top:354px" width="24" height="26" viewBox="0 0 24 26"><path d="M2 25 H20 V9.5 L11 1.5 L2 9.5 Z" fill="#fff" stroke="#c8c8c8" stroke-width="1.8"/><line x1="7" y1="15" x2="16.8" y2="15" stroke="#c8c8c8" stroke-width="1.6"/></svg>
<svg style="left:112px;top:630px" width="24" height="26" viewBox="0 0 24 26"><path d="M2 25 H20 V9.5 L11 1.5 L2 9.5 Z" fill="#fff" stroke="#c8c8c8" stroke-width="1.8"/><line x1="7" y1="15" x2="16.8" y2="15" stroke="#c8c8c8" stroke-width="1.6"/></svg>
<svg style="left:112px;top:1044px" width="24" height="26" viewBox="0 0 24 26"><path d="M2 25 H20 V9.5 L11 1.5 L2 9.5 Z" fill="#fff" stroke="#c8c8c8" stroke-width="1.8"/><line x1="7" y1="15" x2="16.8" y2="15" stroke="#c8c8c8" stroke-width="1.6"/></svg>
<svg style="left:112px;top:1090px" width="24" height="26" viewBox="0 0 24 26"><path d="M2 25 H20 V9.5 L11 1.5 L2 9.5 Z" fill="#fff" stroke="#c8c8c8" stroke-width="1.8"/><line x1="7" y1="15" x2="16.8" y2="15" stroke="#c8c8c8" stroke-width="1.6"/></svg>
<svg style="left:112px;top:1136px" width="24" height="26" viewBox="0 0 24 26"><path d="M2 25 H20 V9.5 L11 1.5 L2 9.5 Z" fill="#fff" stroke="#c8c8c8" stroke-width="1.8"/><line x1="7" y1="15" x2="16.8" y2="15" stroke="#c8c8c8" stroke-width="1.6"/></svg>
<svg style="left:112px;top:1412px" width="24" height="26" viewBox="0 0 24 26"><path d="M2 25 H20 V9.5 L11 1.5 L2 9.5 Z" fill="#fff" stroke="#c8c8c8" stroke-width="1.8"/><line x1="7" y1="15" x2="16.8" y2="15" stroke="#c8c8c8" stroke-width="1.6"/></svg>
<svg style="left:112px;top:1504px" width="24" height="26" viewBox="0 0 24 26"><path d="M2 25 H20 V9.5 L11 1.5 L2 9.5 Z" fill="#fff" stroke="#c8c8c8" stroke-width="1.8"/><line x1="7" y1="15" x2="16.8" y2="15" stroke="#c8c8c8" stroke-width="1.6"/></svg>
<svg style="left:52px;top:484px" width="40" height="46" viewBox="0 0 40 46"><circle cx="15.4" cy="22.3" r="9.5" fill="#7fc6e4"/><circle cx="15.4" cy="22.3" r="3.5" fill="none" stroke="#35444f" stroke-width="2.4"/><rect x="27.4" y="14" width="2.5" height="23" fill="#d05a5e"/><polygon points="23.1,14.8 34.1,14.8 28.6,7.8" fill="#d05a5e"/></svg>
<svg style="left:52px;top:668px" width="40" height="46" viewBox="0 0 40 46"><circle cx="15.4" cy="22.3" r="9.5" fill="#7fc6e4"/><circle cx="15.4" cy="22.3" r="3.5" fill="none" stroke="#35444f" stroke-width="2.4"/><rect x="27.4" y="14" width="2.5" height="23" fill="#d05a5e"/><polygon points="23.1,14.8 34.1,14.8 28.6,7.8" fill="#d05a5e"/></svg>
<svg style="left:52px;top:1266px" width="40" height="46" viewBox="0 0 40 46"><circle cx="15.4" cy="22.3" r="9.5" fill="#7fc6e4"/><circle cx="15.4" cy="22.3" r="3.5" fill="none" stroke="#35444f" stroke-width="2.4"/><rect x="27.4" y="14" width="2.5" height="23" fill="#d05a5e"/><polygon points="23.1,14.8 34.1,14.8 28.6,7.8" fill="#d05a5e"/></svg>
<svg style="left:150px;top:850px" width="30" height="36" viewBox="0 0 30 36"><path d="M14 4 C19.7 4 24 8.3 24 14 C24 17.5 22.5 20 20 24 H8 C5.5 20 4 17.5 4 14 C4 8.3 8.3 4 14 4 Z" fill="#e0a33a"/><rect x="8" y="26" width="12" height="2" fill="#5e6060"/><rect x="9" y="30" width="10" height="2" rx="1" fill="#5e6060"/></svg>
</div></body></html>
